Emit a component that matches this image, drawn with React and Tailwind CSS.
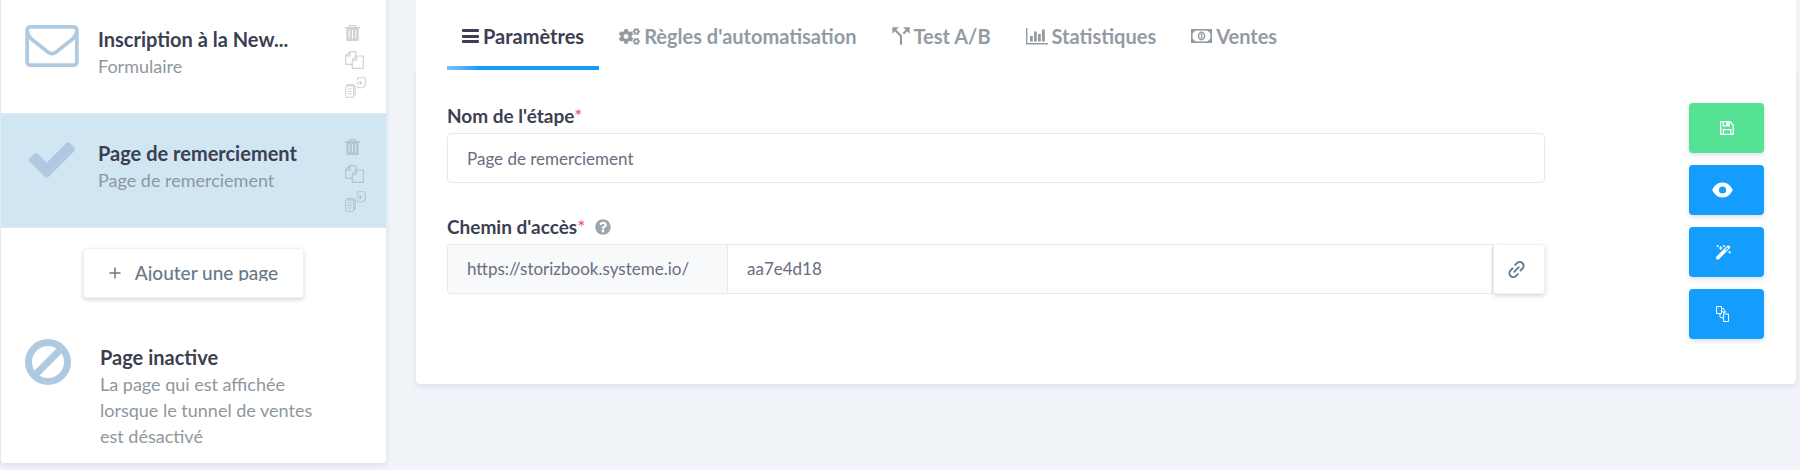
import React, { useState } from 'react';
import { FaCogs, FaQuestionCircle } from 'react-icons/fa';
import { MdCallSplit } from 'react-icons/md';

const BarsIcon = () => (
  <svg width="17" height="16" viewBox="0 0 17 16" fill="currentColor">
    <rect x="0" y="1" width="17" height="3" rx="1" />
    <rect x="0" y="7" width="17" height="3" rx="1" />
    <rect x="0" y="12" width="17" height="3" rx="1" />
  </svg>
);

const ChartIcon = () => (
  <svg width="22" height="17" viewBox="0 0 22 17" fill="currentColor">
    <path d="M0 0h1.4v15H22v1.4H0z" />
    <path d="M4 8h2.8v5.500H4zM8 3.500h2.800v10H8zM12 6h2.800v7.500H12zM16 1.500h2.800v12H16z" />
  </svg>
);

const MoneyIcon = () => (
  <svg width="21" height="14" viewBox="0 0 21 14" fill="none" stroke="currentColor">
    <rect x="0.8" y="0.8" width="19.4" height="12.4" strokeWidth="1.6" />
    <path d="M1 1h3.600L1 4.600zM20 1h-3.600L20 4.600zM1 13h3.600L1 9.400zM20 13h-3.600L20 9.400z" fill="currentColor" strokeWidth="0.8" />
    <ellipse cx="10.5" cy="7" rx="3" ry="3.7" strokeWidth="1.5" />
    <path d="M9.4 5.6l1.3-.8v4M9.2 9h2.8" strokeWidth="1.1" />
  </svg>
);

const EnvelopeIcon = () => (
  <svg width="54" height="42" viewBox="0 256 1792 1408" fill="currentColor">
    <path d="M1664 1504v-768q-32 36-69 66-268 206-426 338-51 43-83 67t-86.500 48.500-102.500 24.500h-2q-48 0-102.500-24.500t-86.500-48.500-83-67q-158-132-426-338-37-30-69-66v768q0 13 9.500 22.500t22.500 9.500h1472q13 0 22.500-9.500t9.500-22.500zm0-1051v-24.500l-.5-13-3-12.500-5.500-9-9-7.500-14-2.500h-1472q-13 0-22.500 9.500t-9.500 22.500q0 168 147 284 193 152 401 317 6 5 35 29.500t46 37.500 44.500 31.500 50.500 27.500 43 9h2q20 0 43-9t50.500-27.500 44.500-31.500 46-37.500 35-29.500q208-165 401-317 54-43 100.500-115.500t46.500-131.500zm128-37v1088q0 66-47 113t-113 47h-1472q-66 0-113-47t-47-113v-1088q0-66 47-113t113-47h1472q66 0 113 47t47 113z" />
  </svg>
);

const CheckIcon = () => (
  <svg width="46" height="36" viewBox="121 334 1550 1188" fill="currentColor">
    <path d="M1671 566q0 40-28 68l-724 724-136 136q-28 28-68 28t-68-28l-136-136-362-362q-28-28-28-68t28-68l136-136q28-28 68-28t68 28l294 295 656-657q28-28 68-28t68 28l136 136q28 28 28 68z" />
  </svg>
);

const BanIcon = () => (
  <svg width="46" height="46" viewBox="0 0 46 46" fill="none" stroke="currentColor" strokeWidth="7">
    <circle cx="23" cy="23" r="19.500" />
    <path d="M9.500 36.500l27-27" />
  </svg>
);

const TrashIcon = () => (
  <svg width="15" height="16" viewBox="0 0 15 16" fill="currentColor" fillRule="evenodd">
    <path d="M4.300 0h6.400l.8 2H15v1.500h-1.300V15q0 1-1 1H2.300q-1 0-1-1V3.500H0V2h3.500zM5.300 1.200L5 2h5l-.3-.8zM3.800 5v8.500h1V5zM7 5v8.500h1V5zM10.200 5v8.500h1V5z" />
  </svg>
);

const CopyIcon = () => (
  <svg width="19" height="18" viewBox="0 0 19 18" fill="none" stroke="currentColor" strokeWidth="1.200">
    <path d="M7 13.400H.7V4.800L5 .7h5.800v4.600M5 .7v4.100H.7" />
    <path d="M7.300 9.200l4.200-4.200h6.800v12.300h-11zM11.500 5v4.200H7.300" />
  </svg>
);

const MoveIcon = () => (
  <svg width="21" height="21" viewBox="0 0 21 21" fill="none" stroke="currentColor" strokeWidth="1.100">
    <path d="M2.500 8.500V7.600h5.700l2 2v8.200H9" />
    <rect x="0.700" y="9" width="8" height="11.300" rx="1" />
    <path d="M2.700 12h4M2.700 14.500h4M2.700 17h4" />
    <path d="M12.500 3.500V1.800q0-1 1-1h5.800q1 0 1 1v6.400l-2.500 2.500h-4.300q-1 0-1-1V8.500" />
    <path d="M11 6h5.500M14.600 4l2 2-2 2" />
  </svg>
);

const LinkIcon = () => (
  <svg width="17" height="17" viewBox="0 0 17 17" fill="none" stroke="currentColor" strokeWidth="1.900" strokeLinecap="round">
    <path d="M7.200 3.900l1.700-1.700a3.700 3.700 0 0 1 5.700 5.200L12.500 9.500" />
    <path d="M9.800 13.100l-1.700 1.700a3.700 3.700 0 0 1-5.700-5.200L4.500 7.500" />
    <path d="M6.200 10.800l4.600-4.600" />
  </svg>
);

const SaveIcon = () => (
  <svg width="14" height="14" viewBox="0 0 14 14" fill="none" stroke="currentColor" strokeWidth="1.300">
    <path d="M.7.700h9.300l3.300 3.300v9.300H.7z" />
    <path d="M3.300.9v4h6v-4M3.300 13V8.600h7.500V13" />
    <path d="M6.500 1h2v3h-2z" fill="currentColor" strokeWidth="0.500" />
  </svg>
);

const EyeIcon = () => (
  <svg width="21" height="16" viewBox="0 0 21 16" fill="currentColor" fillRule="evenodd">
    <path d="M10.500.5C15.500.5 19 4 20.800 8 19 12 15.500 15.500 10.500 15.500S2 12 .2 8C2 4 5.500.5 10.500.5zM10.500 4.400a3.600 3.600 0 1 0 0 7.200 3.600 3.600 0 0 0 0-7.200z" />
  </svg>
);

const WandIcon = () => (
  <svg width="15" height="15" viewBox="0 0 15 15" fill="none" stroke="currentColor">
    <path d="M1.800 12.700L12.300 2.300" strokeWidth="3.600" strokeLinecap="round" />
    <path d="M9.600 5l2.400-2.400" stroke="#149dfc" strokeWidth="1.200" />
    <path d="M4.700 1v4M2.700 3h4M1.700 0v2M.7 1h2M8 0v2M7 1h2M13.600 6v2.400M12.400 7.200h2.400" strokeWidth="1" />
  </svg>
);

const StepsIcon = () => (
  <svg width="13" height="16" viewBox="0 0 13 16" fill="none" stroke="currentColor" strokeWidth="1">
    <path d="M.5.500h5v7h-5zM7.500 8h5v7.500h-5z" />
    <path d="M5.500 2.500h1.700q1 0 1 1V7M6.200 5.200l2 2 1.700-2M4 7.500v3q0 1.200 1.200 1.200h2" />
  </svg>
);

const steps = [
  { id: 1, name: 'Inscription à la New...', type: 'Formulaire', icon: <EnvelopeIcon />, iconClass: 'pl-6' },
  { id: 2, name: 'Page de remerciement', type: 'Page de remerciement', icon: <CheckIcon />, iconClass: 'pl-7 pt-[3px]' },
];

const tabs = [
  { name: 'Paramètres', icon: <BarsIcon /> },
  { name: "Règles d'automatisation", icon: <FaCogs size={21} /> },
  { name: 'Test A/B', icon: <MdCallSplit size={26} className="-m-1" /> },
  { name: 'Statistiques', icon: <ChartIcon /> },
  { name: 'Ventes', icon: <MoneyIcon /> },
];

const actions = [
  { label: 'Enregistrer', icon: <SaveIcon />, className: 'bg-[#55e294] pl-[31px]' },
  { label: 'Aperçu', icon: <EyeIcon />, className: 'bg-[#149dfc] pl-[23px]' },
  { label: 'Modifier la page', icon: <WandIcon />, className: 'bg-[#149dfc] pl-[27px]' },
  { label: 'Changer de modèle', icon: <StepsIcon />, className: 'bg-[#149dfc] pl-[27px]' },
];

const Sidebar = ({ selected, onSelect }) => (
  <aside className="w-[386px] shrink-0 self-start rounded-b bg-white border-l border-[#e3eaf1] shadow-[0_2px_5px_rgba(120,150,180,0.2)]">
    <ul>
      {steps.map((step) => (
        <li
          key={step.id}
          onClick={() => onSelect(step.id)}
          className={`flex items-start border-b border-[#e0e9f1] pt-[25px] pb-[10px] cursor-pointer ${
            selected === step.id ? 'bg-[#d1e6f3]' : 'bg-white'
          }`}
        >
          <div className={`w-[97px] shrink-0 text-[#afcae0] ${step.iconClass}`}>{step.icon}</div>
          <div className="flex-1 min-w-0">
            <h3 className="text-xl leading-[28px] font-bold text-[#3b3f51] truncate">{step.name}</h3>
            <p className="text-lg leading-[26px] text-[#8e979e]">{step.type}</p>
          </div>
          <div className="w-[41px] shrink-0 flex flex-col text-[#7f93a0]/40">
            <button type="button" aria-label="Supprimer" className="h-[26px] flex items-start"><TrashIcon /></button>
            <button type="button" aria-label="Dupliquer" className="h-[26px] flex items-start"><CopyIcon /></button>
            <button type="button" aria-label="Déplacer" className="h-[26px] flex items-start"><MoveIcon /></button>
          </div>
        </li>
      ))}
    </ul>
    <div className="flex justify-center pt-5">
      <button
        type="button"
        className="flex items-center gap-[14px] h-[50px] px-[25px] rounded-sm border border-[#eef1f5] text-[19px] text-[#667a8a] shadow-[0_2px_4px_rgba(100,130,160,0.3)]"
      >
        <svg width="12" height="12" viewBox="0 0 12 12" stroke="currentColor" strokeWidth="1.500">
          <path d="M6 .500v11M.500 6h11" />
        </svg>
        <span className="h-4 leading-4 overflow-hidden font-medium">Ajouter une page</span>
      </button>
    </div>
    <div className="flex items-start pt-[41px] pb-[14px]">
      <div className="w-[99px] shrink-0 pl-6 text-[#afcae0]"><BanIcon /></div>
      <div className="w-[230px] pt-1">
        <h3 className="text-xl leading-[28px] font-bold text-[#3b3f51]">Page inactive</h3>
        <p className="text-lg leading-[26px] text-[#8e979e]">
          La page qui est affichée lorsque le tunnel de ventes est désactivé
        </p>
      </div>
    </div>
  </aside>
);

const App = () => {
  const [selected, setSelected] = useState(2);
  const [activeTab, setActiveTab] = useState('Paramètres');
  const [name, setName] = useState('Page de remerciement');
  const [path, setPath] = useState('aa7e4d18');

  return (
    <div className="min-h-screen flex gap-[30px] pr-1 bg-[#f0f3f8] font-['Lato',sans-serif]">
      <Sidebar selected={selected} onSelect={setSelected} />

      <main className="flex-1 min-w-0 self-start">
        <nav className="relative z-10 flex gap-[5px] pl-[31px] pr-8 bg-white">
          {tabs.map((tab) => (
            <button
              key={tab.name}
              type="button"
              onClick={() => setActiveTab(tab.name)}
              className={`relative flex items-center gap-1 px-[15px] pt-[23px] pb-[21px] text-xl leading-[26px] font-bold ${
                activeTab === tab.name ? 'text-[#3b3f51]' : 'text-[#929ba3]'
              }`}
            >
              {tab.icon}
              {tab.name}
              {activeTab === tab.name && (
                <span className="absolute inset-x-0 bottom-0 h-1 bg-linear-to-r from-[#7cc1f7] to-[#149dfc] to-20%" />
              )}
            </button>
          ))}
        </nav>

        <section className="flex items-start justify-between pl-[31px] pr-8 pt-[33px] pb-[45px] bg-white rounded-b shadow-[0_2px_5px_rgba(120,150,180,0.2)]">
          <form className="w-5/6" onSubmit={(e) => e.preventDefault()}>
            <label htmlFor="name" className="block text-[19px] leading-[26px] font-bold text-[#3b3f51]">
              Nom de l'étape<span className="font-normal text-[#f0486b]">*</span>
            </label>
            <input
              id="name"
              type="text"
              value={name}
              onChange={(e) => setName(e.target.value)}
              className="mt-1 block w-full h-[50px] px-[19px] rounded border border-[#e6eaee] text-[17px] text-[#6a6d80] focus:outline-none"
            />

            <div className="mt-[31px] flex items-center gap-[10px]">
              <label htmlFor="path" className="text-[19px] leading-[26px] font-bold text-[#3b3f51]">
                Chemin d'accès<span className="font-normal text-[#f0486b]">*</span>
              </label>
              <FaQuestionCircle size={16} className="text-[#9ba7af]" />
            </div>
            <div className="mt-1 flex h-[50px] text-[17px]">
              <span className="w-[280px] shrink-0 flex items-center px-[19px] rounded-l border border-r-0 border-[#e6eaee] bg-[#f8f9fb] text-[#6a6d80]">
                https://storizbook.systeme.io/
              </span>
              <input
                id="path"
                type="text"
                value={path}
                onChange={(e) => setPath(e.target.value)}
                className="flex-1 min-w-0 px-[19px] border border-[#e6eaee] text-[#6a6d80] focus:outline-none"
              />
              <button
                type="button"
                aria-label="Copier le lien"
                className="w-[52px] shrink-0 pl-[14px] rounded-sm border border-[#eef1f5] text-[#667a8a] shadow-[0_2px_4px_rgba(100,130,160,0.3)]"
              >
                <LinkIcon />
              </button>
            </div>
          </form>

          <div className="flex flex-col gap-3">
            {actions.map((action) => (
              <button
                key={action.label}
                type="button"
                aria-label={action.label}
                className={`w-[75px] h-[50px] rounded-sm text-white shadow-[0_2px_5px_rgba(100,130,160,0.25)] ${action.className}`}
              >
                {action.icon}
              </button>
            ))}
          </div>
        </section>
      </main>
    </div>
  );
};

export default App;
